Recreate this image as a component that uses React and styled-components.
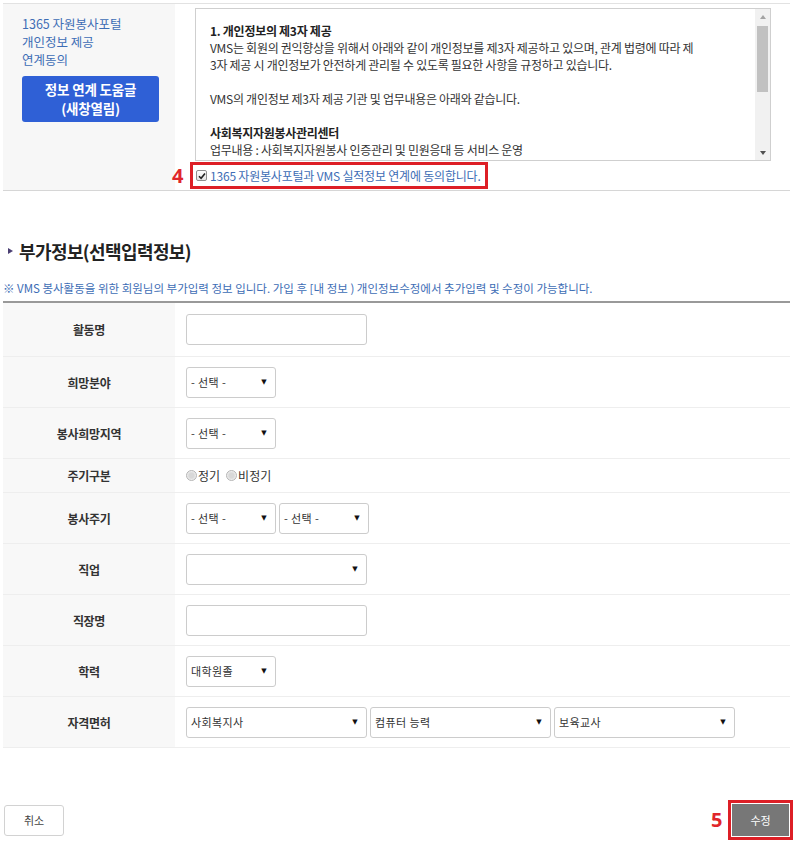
import styled, { createGlobalStyle } from "styled-components";

const GlobalStyle = createGlobalStyle`
  html, body {
    margin: 0;
    padding: 0;
    background: #fff;
  }
  body {
    font-family: "Noto Sans CJK KR", "Noto Sans", sans-serif;
    color: #333;
  }
`;

const blue = "#3d6db5";
const red = "#dd1f26";

// form rows shown in the optional info table
const rows = [
  { label: "활동명", type: "input", wide: true },
  { label: "희망분야", type: "select", selects: [{ text: "- 선택 -" }] },
  { label: "봉사희망지역", type: "select", selects: [{ text: "- 선택 -" }] },
  { label: "주기구분", type: "radio", short: true },
  { label: "봉사주기", type: "select", selects: [{ text: "- 선택 -" }, { text: "- 선택 -" }] },
  { label: "직업", type: "select", selects: [{ text: "", wide: true }] },
  { label: "직장명", type: "input", wide: true },
  { label: "학력", type: "select", selects: [{ text: "대학원졸" }] },
  {
    label: "자격면허",
    type: "select",
    selects: [
      { text: "사회복지사", wide: true },
      { text: "컴퓨터 능력", wide: true },
      { text: "보육교사", wide: true },
    ],
  },
];

function Field({ row }) {
  if (row.type === "input") return <S.Input $wide={row.wide} />;
  if (row.type === "radio") {
    return (
      <S.Radios>
        <S.RadioItem>
          <S.Radio />
          정기
        </S.RadioItem>
        <S.RadioItem>
          <S.Radio />
          비정기
        </S.RadioItem>
      </S.Radios>
    );
  }
  return (
    <S.Selects>
      {row.selects.map((sel, i) => (
        <S.Select key={i} $wide={sel.wide}>
          <span>{sel.text}</span>
          <S.Arrow>▼</S.Arrow>
        </S.Select>
      ))}
    </S.Selects>
  );
}

export default function App() {
  return (
    <>
      <GlobalStyle />
      <S.Page>
        <S.AgreeSection>
          <S.SideCell>
            <S.SideTitle>
              1365 자원봉사포털
              <br />
              개인정보 제공
              <br />
              연계동의
            </S.SideTitle>
            <S.HelpButton>
              정보 연계 도움글
              <br />
              (새창열림)
            </S.HelpButton>
          </S.SideCell>
          <S.MainCell>
            <S.TermsBox>
              <S.TermsText>
                <p>
                  <b>1. 개인정보의 제3자 제공</b>
                  <br />
                  VMS는 회원의 권익향상을 위해서 아래와 같이 개인정보를 제3자 제공하고 있으며, 관계 법령에 따라 제
                  <br />
                  3자 제공 시 개인정보가 안전하게 관리될 수 있도록 필요한 사항을 규정하고 있습니다.
                </p>
                <p>VMS의 개인정보 제3자 제공 기관 및 업무내용은 아래와 같습니다.</p>
                <p>
                  <b>사회복지자원봉사관리센터</b>
                  <br />
                  업무내용 : 사회복지자원봉사 인증관리 및 민원응대 등 서비스 운영
                </p>
              </S.TermsText>
              <S.Scrollbar>
                <S.ScrollUp />
                <S.Track>
                  <S.Thumb />
                </S.Track>
                <S.ScrollDown />
              </S.Scrollbar>
            </S.TermsBox>
            <S.AgreeRow>
              <S.Marker>4</S.Marker>
              <S.RedBox>
                <S.AgreeLabel>
                  <S.Checkbox>
                    <svg width="8" height="8" viewBox="0 0 8 8">
                      <path d="M1 4.2 L3.1 6.3 L7 1.5" fill="none" stroke="#222" strokeWidth="1.6" />
                    </svg>
                  </S.Checkbox>
                  1365 자원봉사포털과 VMS 실적정보 연계에 동의합니다.
                </S.AgreeLabel>
              </S.RedBox>
            </S.AgreeRow>
          </S.MainCell>
        </S.AgreeSection>

        <S.SectionTitle>
          <S.Bullet />
          부가정보(선택입력정보)
        </S.SectionTitle>
        <S.Note>
          ※ VMS 봉사활동을 위한 회원님의 부가입력 정보 입니다. 가입 후 [내 정보 ) 개인정보수정에서 추가입력 및 수정이 가능합니다.
        </S.Note>

        <S.Table>
          {rows.map((row) => (
            <S.Row key={row.label} $short={row.short}>
              <S.Label>{row.label}</S.Label>
              <S.Value>
                <Field row={row} />
              </S.Value>
            </S.Row>
          ))}
        </S.Table>

        <S.Actions>
          <S.CancelButton>취소</S.CancelButton>
          <S.SubmitGroup>
            <S.Marker>5</S.Marker>
            <S.RedBox $tight>
              <S.SubmitButton>수정</S.SubmitButton>
            </S.RedBox>
          </S.SubmitGroup>
        </S.Actions>
      </S.Page>
    </>
  );
}

const S = {
  Page: styled.div`
    width: 787px;
    padding: 3px 10px 0 3px;
  `,
  AgreeSection: styled.div`
    display: grid;
    grid-template-columns: 172px 1fr;
    border-top: 1px solid #e2e2e2;
    border-bottom: 1px solid #d6d6d6;
    height: 186px;
  `,
  SideCell: styled.div`
    background: #f7f7f7;
    padding: 11px 0 0 19px;
  `,
  SideTitle: styled.div`
    color: ${blue};
    font-size: 12.5px;
    line-height: 18px;
  `,
  HelpButton: styled.div`
    margin-top: 7px;
    width: 137px;
    height: 46px;
    box-sizing: border-box;
    padding-top: 4px;
    background: #2f60d6;
    border-radius: 3px;
    color: #fff;
    font-size: 13.5px;
    font-weight: bold;
    line-height: 19px;
    text-align: center;
    letter-spacing: -0.2px;
  `,
  MainCell: styled.div`
    padding: 4px 0 0 20px;
    display: flex;
    flex-direction: column;
  `,
  TermsBox: styled.div`
    display: flex;
    width: 576px;
    height: 153px;
    box-sizing: border-box;
    border: 1px solid #cfcfcf;
    background: #fff;
  `,
  TermsText: styled.div`
    flex: 1;
    overflow: hidden;
    padding: 13px 0 0 14px;
    font-size: 12px;
    line-height: 17px;
    letter-spacing: -0.28px;
    color: #333;
    white-space: nowrap;

    p {
      margin: 0 0 17px;
    }
    b {
      font-weight: bold;
      color: #222;
    }
  `,
  Scrollbar: styled.div`
    width: 15px;
    display: flex;
    flex-direction: column;
    background: #f1f1f1;
  `,
  ScrollUp: styled.span`
    height: 15px;
    display: flex;
    align-items: center;
    justify-content: center;
    &::after {
      content: "";
      border: 3.5px solid transparent;
      border-bottom: 4px solid #a3a3a3;
      border-top: 0;
    }
  `,
  ScrollDown: styled.span`
    height: 15px;
    display: flex;
    align-items: center;
    justify-content: center;
    &::after {
      content: "";
      border: 3.5px solid transparent;
      border-top: 4px solid #505050;
      border-bottom: 0;
    }
  `,
  Track: styled.div`
    flex: 1;
    padding: 2px 2px 0;
  `,
  Thumb: styled.div`
    height: 66px;
    background: #c1c1c1;
  `,
  AgreeRow: styled.div`
    display: flex;
    align-items: center;
    gap: 4px;
    margin: 1px 0 0 -23px;
  `,
  Marker: styled.span`
    width: 14px;
    color: #e0262b;
    font-size: 20px;
    font-weight: bold;
    line-height: 20px;
    font-family: "Open Sans", "Noto Sans", sans-serif;
  `,
  RedBox: styled.div`
    border: 3px solid ${red};
    padding: ${(p) => (p.$tight ? "1px" : "0 4px 0 3px")};
    height: ${(p) => (p.$tight ? "auto" : "21px")};
    display: flex;
    align-items: center;
  `,
  AgreeLabel: styled.label`
    display: flex;
    align-items: center;
    gap: 3px;
    color: ${blue};
    font-size: 12px;
    letter-spacing: -0.2px;
    white-space: nowrap;
  `,
  Checkbox: styled.span`
    width: 11px;
    height: 11px;
    box-sizing: border-box;
    border: 1px solid #8f8f8f;
    border-radius: 2px;
    background: linear-gradient(#fdfdfd, #e4e4e4);
    display: flex;
    align-items: center;
    justify-content: center;
  `,
  SectionTitle: styled.h3`
    margin: 48px 0 0;
    display: flex;
    align-items: center;
    gap: 6px;
    padding-left: 5px;
    font-size: 18px;
    font-weight: bold;
    line-height: 24px;
    letter-spacing: -0.6px;
    color: #222;
  `,
  Bullet: styled.span`
    border: 3.5px solid transparent;
    border-left: 5px solid #4b3f73;
    border-right: 0;
  `,
  Note: styled.p`
    margin: 17px 0 0;
    font-size: 11.5px;
    line-height: 16px;
    color: ${blue};
    white-space: nowrap;
  `,
  Table: styled.div`
    margin-top: 5px;
    border-top: 2px solid #999;
  `,
  Row: styled.div`
    display: grid;
    grid-template-columns: 172px 1fr;
    height: ${(p) => (p.$short ? "33px" : "50px")};
    border-bottom: 1px solid #eeeeee;
    &:first-child {
      height: 53px;
    }
  `,
  Label: styled.div`
    background: #f8f8f8;
    display: flex;
    align-items: center;
    justify-content: center;
    font-size: 12px;
    font-weight: bold;
    color: #333;
    letter-spacing: -0.3px;
  `,
  Value: styled.div`
    display: flex;
    align-items: center;
    padding-left: 11px;
  `,
  Input: styled.div`
    width: ${(p) => (p.$wide ? "181px" : "90px")};
    height: 31px;
    box-sizing: border-box;
    border: 1px solid #cccccc;
    border-radius: 3px;
    background: #fff;
  `,
  Selects: styled.div`
    display: flex;
    gap: 3px;
  `,
  Select: styled.div`
    width: ${(p) => (p.$wide ? "181px" : "90px")};
    height: 31px;
    box-sizing: border-box;
    border: 1px solid #cccccc;
    border-radius: 3px;
    background: #fff;
    display: flex;
    align-items: center;
    justify-content: space-between;
    padding: 0 8px 0 4px;
    font-size: 11px;
    color: #333;
    letter-spacing: 0.4px;
  `,
  Arrow: styled.span`
    font-size: 7px;
    color: #111;
    font-family: "DejaVu Sans", sans-serif;
  `,
  Radios: styled.div`
    display: flex;
    gap: 6px;
    font-size: 12px;
    color: #333;
  `,
  RadioItem: styled.span`
    display: flex;
    align-items: center;
    gap: 1px;
  `,
  Radio: styled.span`
    width: 9px;
    height: 9px;
    border-radius: 50%;
    border: 1px solid #b5b5b5;
    background: radial-gradient(circle, #d8d8d8 40%, #efefef 70%);
  `,
  Actions: styled.div`
    display: flex;
    justify-content: space-between;
    align-items: center;
    margin-top: 52px;
    width: 790px;
  `,
  CancelButton: styled.div`
    margin-left: 1px;
    width: 60px;
    height: 31px;
    box-sizing: border-box;
    border: 1px solid #d2d2d2;
    border-radius: 3px;
    display: flex;
    align-items: center;
    justify-content: center;
    font-size: 11px;
    color: #444;
  `,
  SubmitGroup: styled.div`
    display: flex;
    align-items: center;
    gap: 3px;
  `,
  SubmitButton: styled.div`
    width: 57px;
    height: 32px;
    background: #777;
    color: #fff;
    font-size: 11px;
    display: flex;
    align-items: center;
    justify-content: center;
  `,
};
